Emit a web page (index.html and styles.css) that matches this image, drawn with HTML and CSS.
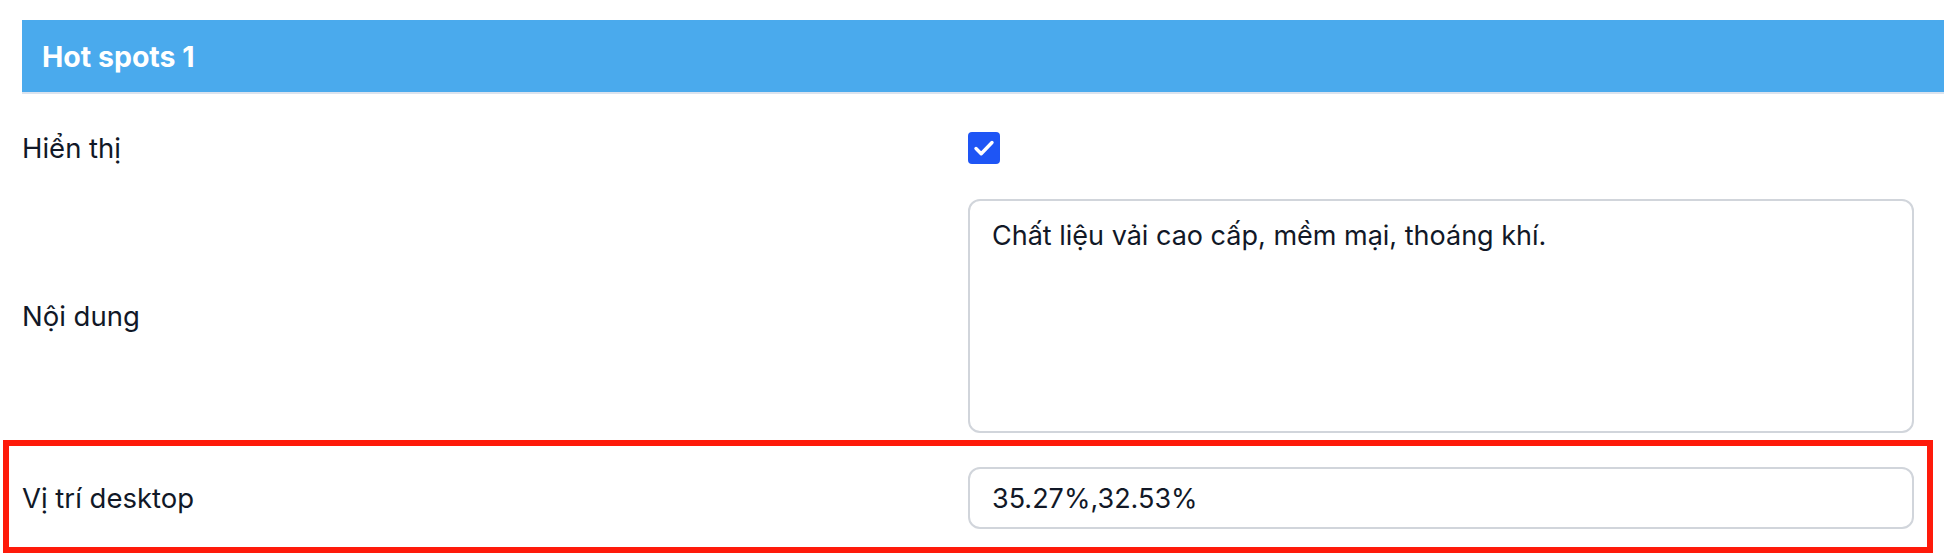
FILE: index.html
```html
<!DOCTYPE html>
<html lang="vi">
<head>
<meta charset="utf-8">
<title>Hot spots 1</title>
<link rel="stylesheet" href="styles.css">
</head>
<body>
<section class="panel">
  <div class="panel-header">Hot spots 1</div>
  <div class="form">
    <div class="row row-check">
      <label class="label">Hiển thị</label>
      <div class="control">
        <span class="checkbox">
          <svg viewBox="0 0 32 32" width="32" height="32"><path d="M8 16.5l5.2 5.2L24 10.5" fill="none" stroke="#fff" stroke-width="3.4" stroke-linecap="round" stroke-linejoin="round"/></svg>
        </span>
      </div>
    </div>
    <div class="row">
      <label class="label">Nội dung</label>
      <div class="control">
        <div class="textarea">Chất liệu vải cao cấp, mềm mại, thoáng khí.</div>
      </div>
    </div>
    <div class="row">
      <label class="label">Vị trí desktop</label>
      <div class="control">
        <div class="input">35.27%,32.53%</div>
      </div>
    </div>
  </div>
</section>
<div class="highlight"></div>
</body>
</html>
```

FILE: styles.css
```css
html, body {
  margin: 0;
  padding: 0;
  background: #ffffff;
}
body {
  width: 1944px;
  height: 560px;
  overflow: hidden;
  font-family: Inter, "Noto Sans", "Liberation Sans", sans-serif;
  color: #111827;
  position: relative;
}
.panel {
  margin: 20px 0 0 22px;
}
.panel-header {
  height: 72px;
  background: #4aaaed;
  border-bottom: 2px solid #dbe3ee;
  color: #ffffff;
  font-weight: 700;
  font-size: 28.5px;
  display: flex;
  align-items: center;
  padding-left: 20px;
}
.form {
  padding: 20px 30px 0 0;
}
.row {
  display: grid;
  grid-template-columns: 1fr 1fr;
  align-items: center;
  padding: 17px 0;
}
.label {
  font-size: 27.5px;
  line-height: 34px;
}
.control {
  display: flex;
  align-items: center;
}
.checkbox {
  width: 32px;
  height: 32px;
  border-radius: 4px;
  background: #1e55f5;
  display: block;
}
.checkbox svg {
  display: block;
}
.textarea {
  box-sizing: border-box;
  width: 100%;
  height: 234px;
  border: 2px solid #d1d5db;
  border-radius: 12px;
  padding: 15px 22px;
  font-size: 27px;
  line-height: 40px;
}
.input {
  box-sizing: border-box;
  width: 100%;
  height: 62px;
  border: 2px solid #d1d5db;
  border-radius: 12px;
  padding: 0 22px;
  font-size: 27px;
  display: flex;
  align-items: center;
}
.highlight {
  position: absolute;
  left: 3px;
  top: 440px;
  width: 1930px;
  height: 113px;
  box-sizing: border-box;
  border: 6px solid #fe1a0a;
}
```
